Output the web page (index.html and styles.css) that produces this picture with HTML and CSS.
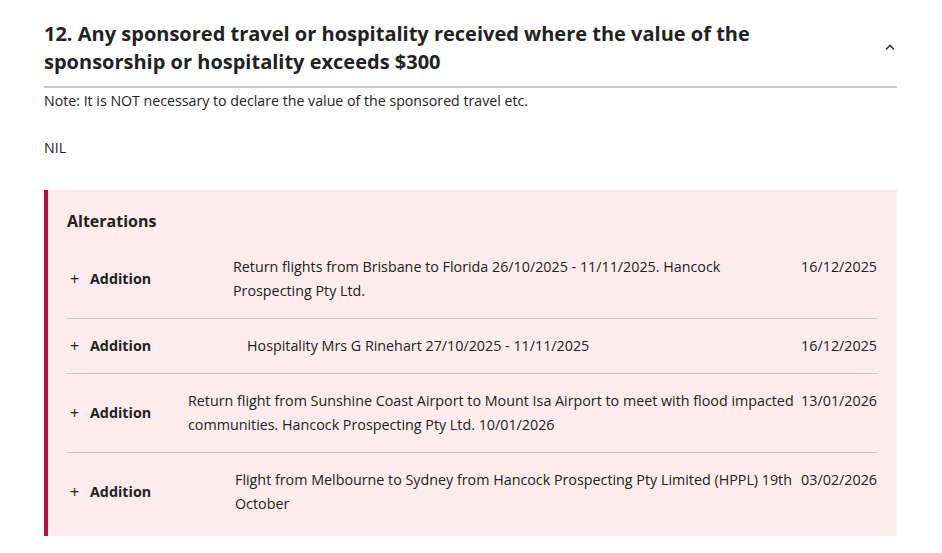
FILE: index.html
```html
<!DOCTYPE html>
<html lang="en">
<head>
<meta charset="utf-8">
<title>Register of interests</title>
<link rel="stylesheet" href="styles.css">
</head>
<body>
<section class="section">
  <div class="section-head">
    <h2 class="section-title">12. Any sponsored travel or hospitality received where the value of the sponsorship or hospitality exceeds $300</h2>
    <svg class="chevron" width="12" height="8" viewBox="0 0 12 8" aria-hidden="true"><path d="M2 6.5 L6 2.5 L10 6.5" fill="none" stroke="#333" stroke-width="1.6"/></svg>
  </div>
  <p class="note">Note: It is NOT necessary to declare the value of the sponsored travel etc.</p>
  <p class="nil">NIL</p>
  <div class="alterations">
    <h3 class="alt-title">Alterations</h3>
    <div class="alt-row">
      <div class="alt-label"><span class="plus">+</span><strong>Addition</strong></div>
      <div class="alt-desc d1">Return flights from Brisbane to Florida 26/10/2025 - 11/11/2025. Hancock Prospecting Pty Ltd.</div>
      <div class="alt-date">16/12/2025</div>
    </div>
    <div class="alt-row">
      <div class="alt-label"><span class="plus">+</span><strong>Addition</strong></div>
      <div class="alt-desc d2">Hospitality Mrs G Rinehart 27/10/2025 - 11/11/2025</div>
      <div class="alt-date">16/12/2025</div>
    </div>
    <div class="alt-row">
      <div class="alt-label"><span class="plus">+</span><strong>Addition</strong></div>
      <div class="alt-desc d3">Return flight from Sunshine Coast Airport to Mount Isa Airport to meet with flood impacted communities. Hancock Prospecting Pty Ltd. 10/01/2026</div>
      <div class="alt-date">13/01/2026</div>
    </div>
    <div class="alt-row last">
      <div class="alt-label"><span class="plus">+</span><strong>Addition</strong></div>
      <div class="alt-desc d4">Flight from Melbourne to Sydney from Hancock Prospecting Pty Limited (HPPL) 19th October</div>
      <div class="alt-date">03/02/2026</div>
    </div>
  </div>
</section>
</body>
</html>
```
FILE: styles.css
```css
html, body {
  margin: 0;
  padding: 0;
  background: #fff;
}
body {
  font-family: "Open Sans", "Noto Sans", sans-serif;
  color: #222;
}
.section {
  padding: 20px 45px 0 44px;
}
.section-head {
  display: flex;
  align-items: center;
  justify-content: space-between;
  border-bottom: 2px solid #c8c8c8;
  padding-bottom: 10px;
}
.section-title {
  margin: 0;
  font-size: 20px;
  line-height: 28px;
  font-weight: 700;
  color: #222;
  max-width: 760px;
}
.chevron {
  margin-right: 1px;
  margin-top: -2px;
}
.note {
  margin: 1px 0 0;
  font-size: 14.2px;
  line-height: 24px;
}
.nil {
  margin: 23px 0 0;
  font-size: 14.2px;
  line-height: 24px;
}
.alterations {
  margin-top: 30px;
  background: #fdeced;
  border-left: 4px solid #b5123b;
  padding: 19px 20px 5px 19px;
}
.alt-title {
  margin: 0 0 7px;
  font-size: 16px;
  line-height: 24px;
  font-weight: 700;
}
.alt-row {
  display: flex;
  align-items: flex-start;
  padding: 15px 0;
  border-bottom: 1px solid #cdc3c4;
  font-size: 14.3px;
  line-height: 24px;
}
.alt-row.last {
  border-bottom: none;
}
.alt-label {
  flex: 0 0 auto;
  align-self: center;
  display: flex;
  align-items: center;
  padding-left: 3px;
  width: 82px;
}
.plus {
  font-size: 16px;
  font-weight: 400;
  width: 20px;
  color: #222;
}
.alt-label strong {
  font-weight: 700;
}
.alt-desc {
  flex: 1 1 auto;
}
.d1 { padding-left: 81px; }
.d2 { padding-left: 95px; }
.d3 { padding-left: 36px; }
.d4 { padding-left: 83px; }
.alt-date {
  flex: 0 0 auto;
  width: 79px;
  text-align: right;
}
```
